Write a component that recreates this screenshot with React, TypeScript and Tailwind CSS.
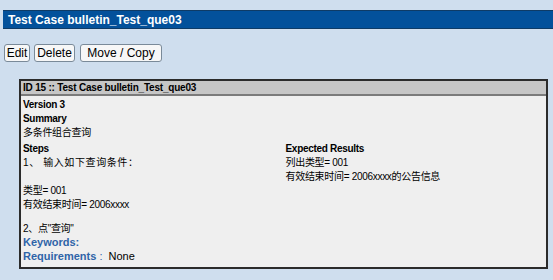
import React from 'react';

const font = { fontFamily: '"Liberation Sans", Arial, "Noto Sans CJK SC", sans-serif' };

const Btn = ({ label, className }: { label: string; className?: string }) => (
  <button
    className={`h-[18px] rounded-[3px] border border-[#7a8a99] bg-[#f7f7f7] text-[12px] leading-none text-black ${className ?? ''}`}
  >
    {label}
  </button>
);

// chinese lines are drawn smaller in the original
const Cn = ({ children, className }: { children: React.ReactNode; className?: string }) => (
  <div className={`text-[10px] tracking-[-0.3px] ${className ?? ''}`}>{children}</div>
);

const Head = ({ children }: { children: React.ReactNode }) => (
  <div className="text-[10px] font-bold tracking-[-0.3px]">{children}</div>
);

export default function App() {
  return (
    <div className="h-[280px] w-[553px] overflow-hidden bg-[#cfdeee] pt-[10px] text-black" style={font}>
      <div className="ml-[3px] flex h-[19px] items-center border-y border-[#0e3b66] bg-[#03519b] pl-[5px] text-[12px] font-bold text-white">
        Test Case bulletin_Test_que03
      </div>

      <div className="mt-[15px] flex gap-[4px] pl-[4px]">
        <Btn label="Edit" className="w-[26px]" />
        <Btn label="Delete" className="w-[41px]" />
        <Btn label="Move / Copy" className="ml-[1px] w-[82px]" />
      </div>

      <div className="ml-[19px] mt-[17px] w-[529px] border-2 border-[#2b2b2b] bg-[#efefef] text-[11px]">
        <div className="flex h-[15px] items-center border-b-2 border-[#7b7b7b] bg-[#c6c6c6] pl-[2px] text-[10px] font-bold tracking-[-0.2px]">
          ID 15 :: Test Case bulletin_Test_que03
        </div>
        <div className="px-[2px] pt-[2px] pb-[4px] leading-[14px]">
          <Head>Version 3</Head>
          <Head>Summary</Head>
          <Cn>多条件组合查询</Cn>
          <div className="mt-[2px] grid grid-cols-2">
            <div>
              <Head>Steps</Head>
              <Cn className="tracking-[0.6px]">1、 输入如下查询条件：</Cn>
              <div className="h-[14px]" />
              <Cn>类型= 001</Cn>
              <Cn>有效结束时间= 2006xxxx</Cn>
              <div className="h-[10px]" />
              <Cn>2、点"查询"</Cn>
            </div>
            <div className="pl-[2px]">
              <Head>Expected Results</Head>
              <Cn>列出类型= 001</Cn>
              <Cn>有效结束时间= 2006xxxx的公告信息</Cn>
            </div>
          </div>
          <div className="leading-[12px] font-bold text-[#2f64a8]">Keywords:</div>
          <div className="mt-[1px]">
            <span className="font-bold text-[#2f64a8]">Requirements</span>
            <span className="text-[#2f64a8]"> : </span>
            <span className="ml-[3px]">None</span>
          </div>
        </div>
      </div>
    </div>
  );
}
